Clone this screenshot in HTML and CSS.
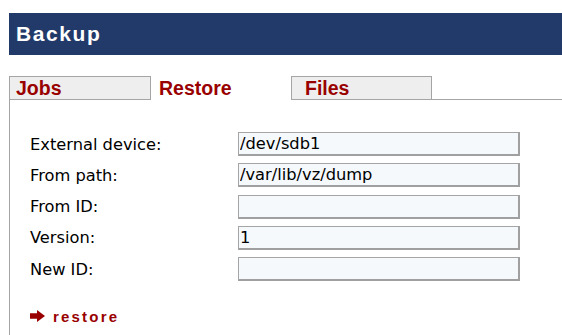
FILE: index.html
```html
<!DOCTYPE html>
<html>
<head>
<meta charset="utf-8">
<title>Backup</title>
<link rel="stylesheet" href="styles.css">
</head>
<body>
<div class="page">
  <div class="header">Backup</div>
  <div class="tabs">
    <div class="tab tab-jobs">Jobs</div>
    <div class="tab tab-active">Restore</div>
    <div class="tab tab-files">Files</div>
    <div class="tab-rest"></div>
  </div>
  <div class="content">
    <div class="form">
      <label class="label">External device:</label>
      <input class="field" type="text" value="/dev/sdb1">
      <label class="label">From path:</label>
      <input class="field" type="text" value="/var/lib/vz/dump">
      <label class="label">From ID:</label>
      <input class="field" type="text" value="">
      <label class="label">Version:</label>
      <input class="field" type="text" value="1">
      <label class="label">New ID:</label>
      <input class="field" type="text" value="">
    </div>
    <a class="action" href="#">
      <svg class="arrow" width="15" height="12" viewBox="0 0 15 12"><path d="M0 3.2H7V0L15 6L7 12V8.8H0Z" fill="#990000"/></svg>
      <span class="action-text">restore</span>
    </a>
  </div>
</div>
</body>
</html>
```
FILE: styles.css
```css
html, body {
  margin: 0;
  padding: 0;
  background: #ffffff;
}
.page {
  padding: 13px 0 0 9px;
  height: 335px;
  box-sizing: border-box;
  display: flex;
  flex-direction: column;
}
.header {
  height: 42px;
  line-height: 42px;
  background: #213a6a;
  color: #ffffff;
  font-family: "Liberation Sans", Arial, sans-serif;
  font-weight: bold;
  font-size: 21px;
  letter-spacing: 1.6px;
  padding-left: 7px;
}
.tabs {
  display: flex;
  margin-top: 21px;
  height: 24px;
}
.tab {
  box-sizing: border-box;
  height: 24px;
  width: 142px;
  border: 1px solid #a5a5a5;
  background: #eeeeee;
  color: #990000;
  font-family: "Liberation Sans", Arial, sans-serif;
  font-weight: bold;
  font-size: 19.5px;
  line-height: 22px;
}
.tab-jobs {
  padding-left: 6px;
}
.tab-active {
  width: 140px;
  border: none;
  background: #ffffff;
  padding: 1px 0 0 8px;
}
.tab-files {
  width: 141px;
  padding-left: 13px;
}
.tab-rest {
  flex: 1;
  border-bottom: 1px solid #a5a5a5;
}
.content {
  flex: 1;
  border-left: 1px solid #a5a5a5;
  padding: 32px 0 0 20px;
}
.form {
  display: grid;
  grid-template-columns: 208px 282px;
  row-gap: 7.25px;
  align-items: center;
}
.label {
  font-family: "DejaVu Sans", Verdana, sans-serif;
  font-size: 16.25px;
  color: #000000;
}
.field {
  box-sizing: border-box;
  width: 282px;
  height: 24px;
  margin: 0;
  padding: 0 0 0 1px;
  border-style: solid;
  border-color: #a5a5a5 #a0a0a0 #a0a0a0 #a5a5a5;
  border-width: 1px 2px 2px 1px;
  background: #f5f9fc;
  font-family: "DejaVu Sans", Verdana, sans-serif;
  font-size: 16.25px;
  color: #000000;
  outline: none;
}
.action {
  display: flex;
  align-items: center;
  height: 16px;
  margin-top: 27px;
  text-decoration: none;
}
.arrow {
  display: block;
  margin-right: 8px;
}
.action-text {
  font-family: "Liberation Sans", Arial, sans-serif;
  font-weight: bold;
  font-size: 15px;
  letter-spacing: 2.2px;
  color: #990000;
}
```
